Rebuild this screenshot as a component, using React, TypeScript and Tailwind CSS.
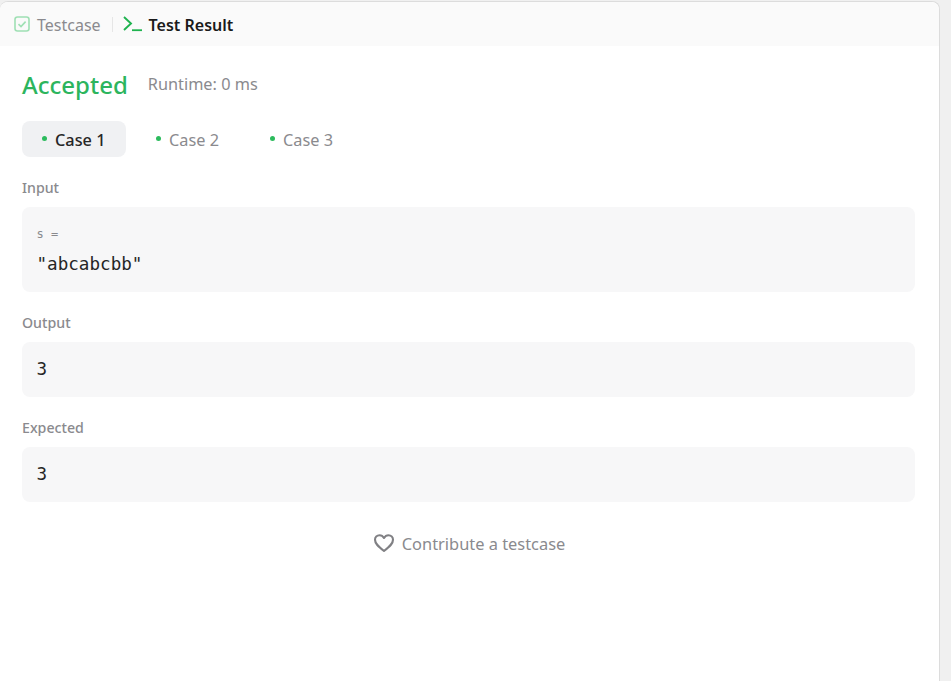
import React from "react";

const sans = "font-['Noto_Sans','Open_Sans',sans-serif]";

function CaseTab({ label, active }: { label: string; active?: boolean }) {
  return (
    <div
      className={`flex h-9 items-center gap-[8px] rounded-lg text-[16.3px] ${active ? "w-[104px] bg-[#f0f1f3] pl-[20px] font-medium text-[#262626]" : "w-[114px] pl-[21px] text-[#8a8a8e]"}`}
    >
      <span className="h-[5px] w-[5px] -translate-y-px rounded-full bg-[#2cbb5d]" />
      <span className="translate-y-px">{label}</span>
    </div>
  );
}

function Field({ label, children }: { label: string; children: React.ReactNode }) {
  return (
    <div className="flex flex-col">
      <div className="flex h-[20px] translate-y-px items-center text-[14.2px] font-medium leading-5 text-[#8a8a8e]">{label}</div>
      <div className="mt-[10px] rounded-lg bg-[#f7f7f8] px-[14.5px]">{children}</div>
    </div>
  );
}

export default function App() {
  return (
    <div className={`h-[681px] w-[951px] overflow-hidden bg-[#f0f0f0] pt-px ${sans}`}>
      <div className="h-[680px] w-[940px] rounded-t-lg border-t border-r border-[#dcdcdc] bg-white">
        <div className="flex h-[44px] items-center rounded-t-lg bg-[#fafafa] pl-[14px]">
          <svg width="16" height="16" viewBox="0 0 16 16" fill="none" className="shrink-0">
            <rect x="1" y="1" width="14" height="14" rx="2.5" stroke="#9fe0b4" strokeWidth="1.6" />
            <path d="M4.5 8.2 7 10.6l4.6-5" stroke="#9fe0b4" strokeWidth="1.6" />
          </svg>
          <span className="ml-[7px] translate-y-px text-[16px] text-[#8a8a8e]">Testcase</span>
          <span className="ml-[11px] h-[15px] w-px bg-[#e6e6e6]" />
          <svg width="20" height="16" viewBox="0 0 20 16" fill="none" className="ml-[10px] shrink-0">
            <path d="M1 1l7 6.5L1 14" stroke="#1fb34f" strokeWidth="1.9" />
            <path d="M9 14.2h10" stroke="#1fb34f" strokeWidth="1.8" />
          </svg>
          <span className="ml-[6px] translate-y-px text-[16px] font-semibold text-[#1a1a1a]">Test Result</span>
        </div>
        <div className="px-[22px] pt-[21px]">
          <div className="flex h-[34px] items-center">
            <span className="translate-y-px text-[24px] font-[550] text-[#2cb55d]">Accepted</span>
            <span className="ml-[20px] text-[16.3px] text-[#8a8a8e]">Runtime: 0 ms</span>
          </div>
          <div className="mt-[20px] flex">
            <CaseTab label="Case 1" active />
            <div className="ml-[9px] flex">
              <CaseTab label="Case 2" />
              <CaseTab label="Case 3" />
            </div>
          </div>
          <div className="mt-[20px] flex w-[893px] flex-col gap-[20px]">
            <Field label="Input">
              <div className="flex h-[85px] flex-col justify-center font-['DejaVu_Sans_Mono',monospace]">
                <div className="-translate-y-[2px] text-[12px] leading-5 text-[#8a8a8e]">s =</div>
                <div className="mt-[8px] text-[17.6px] leading-5 text-[#262626]">"abcabcbb"</div>
              </div>
            </Field>
            <Field label="Output">
              <div className="flex h-[55px] items-center font-['DejaVu_Sans_Mono',monospace] text-[17.6px] text-[#262626]">3</div>
            </Field>
            <Field label="Expected">
              <div className="flex h-[55px] items-center font-['DejaVu_Sans_Mono',monospace] text-[17.6px] text-[#262626]">3</div>
            </Field>
          </div>
          <div className="mt-[30px] flex w-[893px] translate-x-px items-center justify-center gap-[6px] text-[16.4px] text-[#8a8a8e]">
            <svg width="22" height="20" viewBox="0 0 22 20" fill="none" className="-translate-x-px -translate-y-px">
              <path
                d="M11 18C5 13.4 2 10.6 2 6.8 2 4.1 4 2.2 6.5 2.2c1.9 0 3.5 1 4.5 2.8 1-1.8 2.6-2.8 4.5-2.8C18 2.2 20 4.1 20 6.8c0 3.8-3 6.6-9 11.2Z"
                stroke="#808084"
                strokeWidth="2.1"
                strokeLinejoin="round"
              />
            </svg>
            <span>Contribute a testcase</span>
          </div>
        </div>
      </div>
    </div>
  );
}
